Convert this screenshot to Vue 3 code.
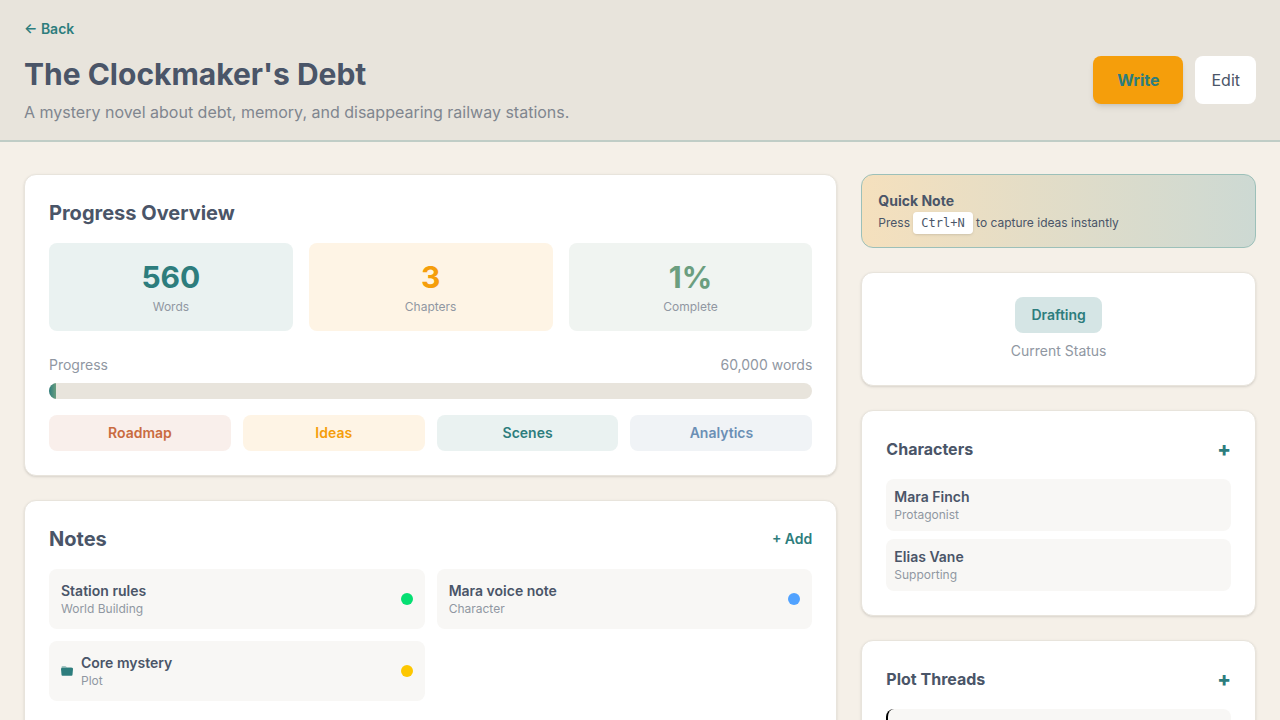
<script setup>
const stats = [
  { value: '560', label: 'Words', tone: 'teal' },
  { value: '3', label: 'Chapters', tone: 'amber' },
  { value: '1%', label: 'Complete', tone: 'sage' },
]
const goal = { percent: 0.93, label: '60,000 words' }
const sections = [
  { name: 'Roadmap', tone: 'rust' },
  { name: 'Ideas', tone: 'amber' },
  { name: 'Scenes', tone: 'teal' },
  { name: 'Analytics', tone: 'blue' },
]
const notes = [
  { title: 'Station rules', kind: 'World Building', dot: 'green' },
  { title: 'Mara voice note', kind: 'Character', dot: 'sky' },
  { title: 'Core mystery', kind: 'Plot', dot: 'yellow', folder: true },
]
const characters = [
  { name: 'Mara Finch', role: 'Protagonist' },
  { name: 'Elias Vane', role: 'Supporting' },
]
</script>

<template>
  <div class="page">
    <header class="top">
      <div class="crumb"><a href="#" class="link">← Back</a></div>
      <div class="top-row">
        <div>
          <h1>The Clockmaker's Debt</h1>
          <p class="lead">A mystery novel about debt, memory, and disappearing railway stations.</p>
        </div>
        <div class="actions">
          <a href="#write" class="btn write">Write</a>
          <button type="button" class="btn edit">Edit</button>
        </div>
      </div>
    </header>

    <main class="layout">
      <div class="column wide">
        <section class="card">
          <h2>Progress Overview</h2>
          <div class="stats">
            <div v-for="s in stats" :key="s.label" class="stat" :class="s.tone">
              <div class="value">{{ s.value }}</div>
              <div class="small">{{ s.label }}</div>
            </div>
          </div>
          <div class="goal">
            <span>Progress</span>
            <span>{{ goal.label }}</span>
          </div>
          <div class="track">
            <div class="fill" :style="{ width: goal.percent + '%' }"></div>
          </div>
          <nav class="sections">
            <a v-for="s in sections" :key="s.name" href="#" class="section-link" :class="s.tone">{{ s.name }}</a>
          </nav>
        </section>

        <section class="card grow">
          <div class="card-head">
            <h2>Notes</h2>
            <button type="button" class="link">+ Add</button>
          </div>
          <div class="notes">
            <article v-for="n in notes" :key="n.title" class="note">
              <svg v-if="n.folder" class="folder" viewBox="0 0 24 24" aria-hidden="true">
                <path d="M1 8V4.500Q1 2.500 3 2.500H8.500Q10 2.500 11 4L12 5H20Q22 5 22 7V9Z" fill="#86b3b0" />
                <path d="M0 8Q0 6 2 6H9Q10.500 6 11.500 5.500H22Q24 5.500 24 8L23 19.500Q23 21.500 21 21.500H3Q1 21.500 1 19.500Z" fill="#2d7d7d" />
              </svg>
              <div class="note-text">
                <div class="name">{{ n.title }}</div>
                <div class="small">{{ n.kind }}</div>
              </div>
              <span class="dot" :class="n.dot"></span>
            </article>
          </div>
        </section>
      </div>

      <aside class="column">
        <section class="quick">
          <h3 class="quick-title">Quick Note</h3>
          <p>Press <kbd>Ctrl+N</kbd> to capture ideas instantly</p>
        </section>

        <section class="card status">
          <span class="badge">Drafting</span>
          <p>Current Status</p>
        </section>

        <section class="card">
          <div class="card-head">
            <h3>Characters</h3>
            <button type="button" class="plus" aria-label="Add character">+</button>
          </div>
          <div class="list">
            <div v-for="c in characters" :key="c.name" class="entry">
              <div class="name">{{ c.name }}</div>
              <div class="small">{{ c.role }}</div>
            </div>
          </div>
        </section>

        <section class="card">
          <div class="card-head">
            <h3>Plot Threads</h3>
            <button type="button" class="plus" aria-label="Add plot thread">+</button>
          </div>
          <div class="list">
            <div class="entry thread"></div>
          </div>
        </section>
      </aside>
    </main>
  </div>
</template>

<style>
body {
  background: #f5f0e8;
}
</style>

<style scoped>
.page,
.page * {
  box-sizing: border-box;
}
.page {
  min-height: 100vh;
  background: #f5f0e8;
  color: #4a5568;
  font: 16px/24px Inter, 'Liberation Sans', sans-serif;
}
h1, h2, h3, p {
  margin: 0;
}
a {
  text-decoration: none;
}
button {
  font: inherit;
  border: 0;
  padding: 0;
  background: none;
  cursor: pointer;
}
.top {
  padding: 16px 24px;
  background: #e8e4dc;
  border-bottom: 2px solid #c0cdc6;
}
.crumb {
  margin-bottom: 16px;
}
.link {
  color: #2d7d7d;
  font-size: 14px;
  line-height: 20px;
  font-weight: 600;
}
.top-row {
  display: flex;
  justify-content: space-between;
  align-items: flex-start;
}
h1 {
  font-size: 30px;
  line-height: 36px;
  font-weight: 700;
}
.lead {
  margin-top: 8px;
  color: #80868f;
}
.actions {
  display: flex;
  gap: 12px;
}
.btn {
  padding: 12px 16px;
  border-radius: 8px;
}
.write {
  padding: 12px 24px;
  background: #f59e0b;
  color: #2d7d7d;
  font-weight: 700;
  box-shadow: 0 4px 6px -1px rgba(0, 0, 0, 0.1), 0 2px 4px -2px rgba(0, 0, 0, 0.1);
}
.edit {
  background: #fff;
  color: #4a5568;
}
.layout {
  display: grid;
  grid-template-columns: repeat(3, minmax(0, 1fr));
  gap: 24px;
  padding: 32px 24px;
}
.column {
  display: flex;
  flex-direction: column;
  gap: 24px;
}
.wide {
  grid-column: span 2;
}
.card {
  padding: 24px;
  background: #fff;
  border: 1px solid #e8e4dc;
  border-radius: 12px;
  box-shadow: 0 1px 3px rgba(0, 0, 0, 0.1), 0 1px 2px -1px rgba(0, 0, 0, 0.1);
}
.grow {
  flex: 1;
}
h2 {
  font-size: 20px;
  line-height: 28px;
  font-weight: 700;
}
h3 {
  font-size: 16px;
  line-height: 24px;
  font-weight: 700;
}
.small {
  color: #9097a2;
  font-size: 12px;
  line-height: 16px;
}
.stats {
  display: grid;
  grid-template-columns: repeat(3, 1fr);
  gap: 16px;
  margin: 16px 0 24px;
}
.stat {
  padding: 16px;
  border-radius: 8px;
  text-align: center;
}
.value {
  margin-bottom: 4px;
  font-size: 30px;
  line-height: 36px;
  font-weight: 700;
}
.teal {
  color: #2d7d7d;
  background: #eaf2f1;
}
.amber {
  color: #f59e0b;
  background: #fef4e5;
}
.sage {
  color: #6b9e7f;
  background: #f0f4f1;
}
.rust {
  color: #c96b40;
  background: #f9efeb;
}
.blue {
  color: #6b8fb5;
  background: #f0f3f6;
}
.goal {
  display: flex;
  justify-content: space-between;
  margin-bottom: 8px;
  color: #9097a2;
  font-size: 14px;
  line-height: 20px;
}
.track {
  height: 16px;
  overflow: hidden;
  background: #e8e4dc;
  border-radius: 8px;
}
.fill {
  height: 100%;
  background: linear-gradient(to right, #2d7d7d, #6b9e7f);
}
.sections {
  display: grid;
  grid-template-columns: repeat(4, 1fr);
  gap: 12px;
  margin-top: 16px;
}
.section-link {
  padding: 8px;
  border-radius: 8px;
  font-size: 14px;
  line-height: 20px;
  font-weight: 600;
  text-align: center;
}
.card-head {
  display: flex;
  justify-content: space-between;
  align-items: center;
  margin-bottom: 16px;
}
.notes {
  display: grid;
  grid-template-columns: repeat(2, 1fr);
  gap: 12px;
}
.note {
  display: flex;
  align-items: center;
  gap: 8px;
  padding: 12px;
  background: #f8f7f5;
  border-radius: 8px;
}
.note-text {
  flex: 1;
}
.name {
  font-size: 14px;
  line-height: 20px;
  font-weight: 600;
}
.folder {
  width: 12px;
  height: 12px;
}
.dot {
  width: 12px;
  height: 12px;
  border-radius: 50%;
}
.green {
  background: #05df72;
}
.sky {
  background: #51a2ff;
}
.yellow {
  background: #fdc700;
}
.quick {
  padding: 16px;
  border: 1px solid #9cc0b9;
  border-radius: 12px;
  background: linear-gradient(to right, #f5e0bd, #cdd9d3);
  font-size: 12px;
  line-height: 16px;
}
.quick-title {
  margin-bottom: 4px;
  font-size: 14px;
  line-height: 20px;
}
kbd {
  padding: 4px 8px;
  background: #fff;
  border-radius: 4px;
  box-shadow: 0 1px 3px rgba(0, 0, 0, 0.1), 0 1px 2px -1px rgba(0, 0, 0, 0.1);
  font-family: 'DejaVu Sans Mono', 'Liberation Mono', monospace;
  font-size: 12px;
}
.status {
  display: flex;
  flex-direction: column;
  align-items: center;
  gap: 8px;
  color: #9097a2;
  font-size: 14px;
  line-height: 20px;
}
.badge {
  padding: 8px 16px;
  background: #d5e5e5;
  color: #2d7d7d;
  border-radius: 8px;
  font-weight: 600;
}
.plus {
  color: #2d7d7d;
  font-size: 20px;
  line-height: 28px;
  font-weight: 800;
}
.list {
  display: flex;
  flex-direction: column;
  gap: 8px;
}
.entry {
  padding: 8px;
  background: #f8f7f5;
  border-radius: 8px;
}
.thread {
  min-height: 52px;
  border-left: 2px solid #000;
}
</style>
